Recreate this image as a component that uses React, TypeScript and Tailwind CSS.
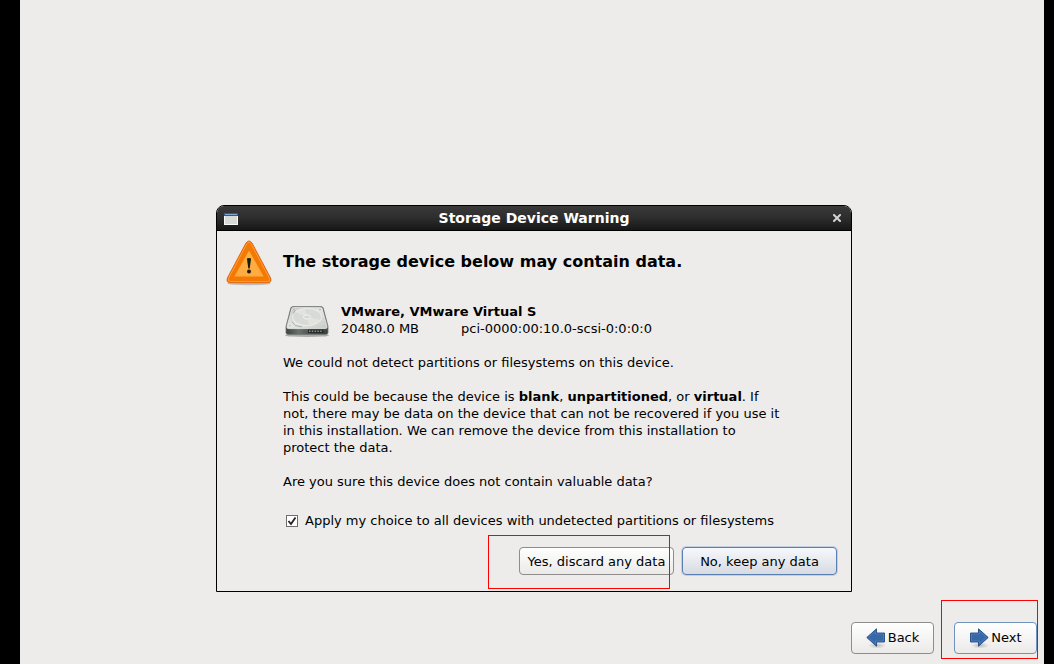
import type { ReactNode } from "react";

function WarningIcon() {
  return (
    <svg width="48" height="48" viewBox="0 0 48 48" aria-hidden="true">
      <defs>
        <linearGradient id="warnFill" x1="0" y1="0" x2="0" y2="1">
          <stop offset="0" stopColor="#fcaf3e" />
          <stop offset="1" stopColor="#ffab42" />
        </linearGradient>
      </defs>
      <ellipse cx="24" cy="43.6" rx="22" ry="1.6" fill="#000" opacity="0.2" />
      <path d="M21 3 Q24 -1 27 3 L45.6 38 Q47 42.7 42.8 42.7 H5.2 Q1 42.7 2.4 38 Z" fill="#f57900" stroke="#d9600a" strokeWidth="0.9" />
      <path d="M21.8 3.8 Q24 0.6 26.2 3.8 L44.5 38.4 Q45.4 41.6 42.4 41.6 H5.6 Q2.6 41.6 3.5 38.4 Z" fill="none" stroke="#fca04e" strokeWidth="0.9" />
      <path d="M24 10.5 L38.6 36.5 H9.4 Z" fill="url(#warnFill)" />
      <path d="M21.9 18.6 Q24 17.6 26.1 18.6 L24.7 28.6 H23.3 Z" fill="#1c1a12" />
      <circle cx="24" cy="31.6" r="2" fill="#1c1a12" />
    </svg>
  );
}

function DiskIcon() {
  return (
    <svg width="48" height="36" viewBox="0 0 48 36" aria-hidden="true">
      <defs>
        <linearGradient id="diskTop" x1="0" y1="0" x2="1" y2="1">
          <stop offset="0" stopColor="#c4c7c2" />
          <stop offset="0.5" stopColor="#e4e6e2" />
          <stop offset="1" stopColor="#c6c9c4" />
        </linearGradient>
        <linearGradient id="diskFront" x1="0" y1="0" x2="1" y2="0">
          <stop offset="0" stopColor="#3c423e" />
          <stop offset="0.3" stopColor="#6b716c" />
          <stop offset="0.6" stopColor="#4b504c" />
          <stop offset="1" stopColor="#3c423e" />
        </linearGradient>
      </defs>
      <ellipse cx="24" cy="32.4" rx="22" ry="1.6" fill="#000" opacity="0.28" />
      <path d="M10 3.5 H38 Q39.6 3.5 40.2 5 L45 23.5 V29.5 Q45 31.5 43 31.5 H5 Q3 31.5 3 29.5 V23.5 L7.8 5 Q8.4 3.5 10 3.5 Z" fill="url(#diskFront)" stroke="#737873" strokeWidth="0.8" />
      <path d="M10.2 4.4 H37.8 Q38.8 4.4 39.2 5.6 L44 23.4 Q44.4 25.6 42.6 25.6 H5.4 Q3.6 25.6 4 23.4 L8.8 5.6 Q9.2 4.4 10.2 4.4 Z" fill="url(#diskTop)" stroke="#eff0ee" strokeWidth="0.8" />
      <ellipse cx="24" cy="14" rx="14.6" ry="8.6" fill="#d8dad6" stroke="#f1f2f0" strokeWidth="0.8" />
      <path d="M24 14 L12 9 Q16 6 22 5.6 Z M24 14 L37.5 17 Q33 21.5 26 22.2 Z" fill="#fff" opacity="0.25" />
      <ellipse cx="24" cy="14" rx="3.6" ry="2" fill="#d4d6d2" stroke="#f6f6f5" strokeWidth="0.9" />
      <path d="M9 18.5 L12 22.5 L19 23.8 M12 7 L10.5 10.5" fill="none" stroke="#a4a8a3" strokeWidth="0.9" />
      <g fill="#8f948f" stroke="#fff" strokeWidth="0.4">
        <circle cx="11" cy="6.4" r="0.9" />
        <circle cx="37" cy="6.4" r="0.9" />
        <circle cx="7" cy="22.8" r="0.9" />
        <circle cx="41" cy="22.8" r="0.9" />
      </g>
      <path d="M25 26.6 H40.5 V30 H25 Z" fill="#272c2a" />
      <path d="M26 28.3 H40" stroke="#8d928e" strokeWidth="1.4" strokeDasharray="1.5 1.3" />
    </svg>
  );
}

function ArrowIcon({ direction }: { direction: "left" | "right" }) {
  const shape =
    direction === "left"
      ? "M0.8 10.5 L10.5 1.8 V6 H18.5 V15 H10.5 V19.2 Z"
      : "M19.2 10.5 L9.5 1.8 V6 H1.5 V15 H9.5 V19.2 Z";
  const shine =
    direction === "left"
      ? "M2.5 10.5 L9.5 4.1 V7 H17.5 V14 H9.5 V16.9 Z"
      : "M17.5 10.5 L10.5 4.1 V7 H2.5 V14 H10.5 V16.9 Z";
  const shadow = `arrowShadow-${direction}`;
  return (
    <svg width="20" height="20" viewBox="0 0 20 20" aria-hidden="true" className="overflow-visible">
      <defs>
        <radialGradient id={shadow}>
          <stop offset="0" stopColor="#000" stopOpacity="0.22" />
          <stop offset="1" stopColor="#000" stopOpacity="0" />
        </radialGradient>
      </defs>
      <ellipse cx="11" cy="18.5" rx="9" ry="3.2" fill={`url(#${shadow})`} />
      <path d={shape} fill="#3767a6" stroke="#204a87" strokeWidth="0.9" strokeLinejoin="round" />
      <path d={shine} fill="none" stroke="#6d97ca" strokeWidth="0.7" opacity="0.6" />
    </svg>
  );
}

function Highlight({ className }: { className: string }) {
  return <span aria-hidden="true" className={`pointer-events-none absolute border border-[#ff0000] ${className}`} />;
}

function PushButton({ children, className }: { children: ReactNode; className: string }) {
  return (
    <button
      type="button"
      className={`flex items-center justify-center whitespace-nowrap rounded-[4px] border ${className}`}
    >
      {children}
    </button>
  );
}

export default function App() {
  return (
    <div className="min-h-screen bg-black pr-[10px] pl-5 font-['DejaVu_Sans',sans-serif] text-[13px] leading-[17px] text-black">
      <main className="flex min-h-screen flex-col bg-[#edeceb]">
        <div className="flex justify-center pt-[205px] pl-1">
          <section
            role="dialog"
            aria-labelledby="dialog-title"
            className="w-full max-w-[636px] rounded-t-[8px] border border-black bg-[#edeceb]"
          >
            <header className="flex h-[25px] items-center rounded-t-[7px] border-b border-black bg-linear-to-b from-[#3a3a3a] via-[#2d2d2d] to-[#171717] px-[7px] text-white">
              <svg width="14" height="14" viewBox="0 0 14 14" aria-hidden="true">
                <rect y="2" width="14" height="12" fill="#f8f8f8" />
                <rect y="2" width="14" height="3" fill="#2f5a96" />
                <rect x="1" y="3" width="12" height="1" fill="#7ea6d8" />
                <rect x="1" y="5" width="12" height="8" fill="#d8dad5" />
              </svg>
              <h1 id="dialog-title" className="flex-1 text-center text-[14px] font-bold">
                Storage Device Warning
              </h1>
              <button type="button" aria-label="Close" className="flex w-[14px] justify-center">
                <svg width="8" height="8" viewBox="0 0 8 8" aria-hidden="true">
                  <path d="M1 1 L7 7 M7 1 L1 7" stroke="#d3d3d3" strokeWidth="2" strokeLinecap="square" />
                </svg>
              </button>
            </header>

            <div className="flex gap-[10px] px-2 pt-[9px]">
              <div className="shrink-0">
                <WarningIcon />
              </div>
              <div className="min-w-0 flex-1">
                <h2 className="pt-3 text-[16px] leading-5 font-bold">The storage device below may contain data.</h2>

                <div className="mt-[31px] flex gap-[10px]">
                  <div className="shrink-0">
                    <DiskIcon />
                  </div>
                  <div>
                    <p className="font-bold">VMware, VMware Virtual S</p>
                    <p className="flex">
                      <span className="w-[120px]">20480.0 MB</span>
                      <span>pci-0000:00:10.0-scsi-0:0:0:0</span>
                    </p>
                  </div>
                </div>

                <div className="mt-[15px] flex max-w-[500px] flex-col gap-[17px]">
                  <p>We could not detect partitions or filesystems on this device.</p>
                  <p>
                    This could be because the device is <b>blank</b>, <b>unpartitioned</b>, or <b>virtual</b>. If not,
                    there may be data on the device that can not be recovered if you use it in this installation. We can
                    remove the device from this installation to protect the data.
                  </p>
                  <p>Are you sure this device does not contain valuable data?</p>
                </div>

                <label className="mt-[22px] flex items-center gap-[7px] pl-[3px]">
                  <span className="grid">
                    <input
                      type="checkbox"
                      defaultChecked
                      className="peer col-start-1 row-start-1 size-3 appearance-none border border-[#6e6e6e] bg-white"
                    />
                    <svg
                      width="12"
                      height="12"
                      viewBox="0 0 12 12"
                      aria-hidden="true"
                      className="pointer-events-none invisible col-start-1 row-start-1 peer-checked:visible"
                    >
                      <path d="M2.5 6 L5 9 L9.5 2.5" fill="none" stroke="#222" strokeWidth="1.8" />
                    </svg>
                  </span>
                  Apply my choice to all devices with undetected partitions or filesystems
                </label>
              </div>
            </div>

            <div className="flex justify-end gap-2 pt-[18px] pr-[14px] pb-[16px]">
              <div className="relative">
                <PushButton className="h-7 w-[155px] border-[#8f8d8b] bg-linear-to-b from-white to-[#ebeae9]">
                  Yes, discard any data
                </PushButton>
                <Highlight className="-top-3 right-1 h-[54px] w-[182px]" />
              </div>
              <PushButton className="h-7 w-[155px] border-[#5b7fb0] bg-linear-to-b from-[#f6f8fc] to-[#d7dbe2] shadow-[0_0_0_1px_#c3d0e2]">
                No, keep any data
              </PushButton>
            </div>
          </section>
        </div>

        <footer className="mt-auto flex justify-end gap-5 pt-6 pr-[7px] pb-[10px]">
          <PushButton className="h-8 w-[83px] gap-[2px] border-[#8f8d8b] bg-linear-to-b from-white to-[#ebeae9] pb-[2px]">
            <ArrowIcon direction="left" />
            Back
          </PushButton>
          <div className="relative">
            <PushButton className="h-8 w-[83px] gap-[2px] border-[#6f93bf] bg-linear-to-b from-white to-[#ebeae9] pb-[2px]">
              <ArrowIcon direction="right" />
              Next
            </PushButton>
            <Highlight className="-top-[22px] -right-px h-[59px] w-[97px]" />
          </div>
        </footer>
      </main>
    </div>
  );
}
